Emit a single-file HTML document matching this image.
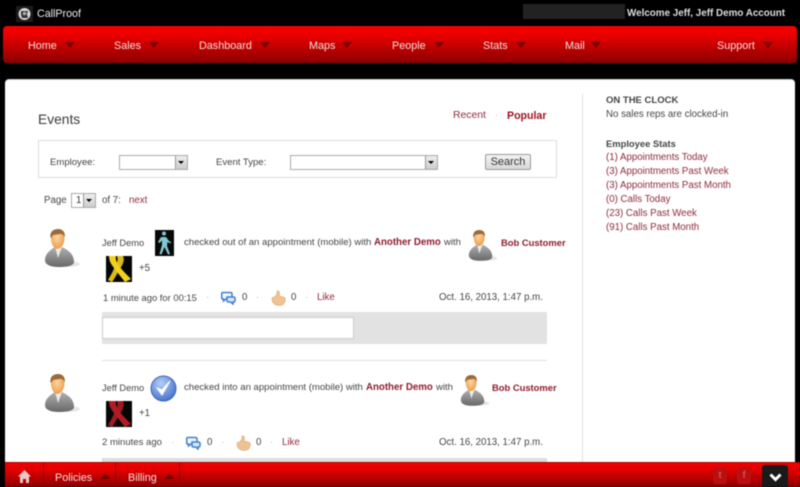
<!DOCTYPE html>
<html><head><meta charset="utf-8"><style>
html,body{margin:0;padding:0;background:#000}
#p{position:relative;width:800px;height:487px;overflow:hidden;background:#000;font-family:"Liberation Sans",Arial,sans-serif;font-size:9.7px;color:#454545;filter:blur(.4px)}
#p div,#p span.a,#p svg.a{position:absolute}
.t{position:absolute;white-space:nowrap;line-height:14px;height:14px}
.e{font-size:9.55px}
.l{color:#8e2b3e}
.b{font-weight:bold}
.r{color:#8e1c2c;font-weight:bold}
.n{color:#f6dcdc;font-size:10.8px}
.ar{width:0;height:0;border-left:5px solid transparent;border-right:5px solid transparent;border-top:6px solid #7c0000}
.au{width:0;height:0;border-left:5px solid transparent;border-right:5px solid transparent;border-bottom:5px solid #700000}
.sel{background:#fff;border:1px solid #aaa;box-sizing:border-box}
.sb{right:0;top:0;width:12px;height:100%;background:linear-gradient(#eee,#ccc);border-left:1px solid #999;box-sizing:border-box}
.sb:after{content:"";position:absolute;left:2px;top:5px;border-left:3px solid transparent;border-right:3px solid transparent;border-top:3px solid #000}
.d{color:#bbb}
</style></head><body><div id="p">
<svg width="0" height="0" style="position:absolute"><defs>
<radialGradient id="sk" cx=".45" cy=".4" r=".7"><stop offset="0" stop-color="#fdd6a0"/><stop offset="1" stop-color="#e8943f"/></radialGradient>
<linearGradient id="bd" x1="0" y1="0" x2="0" y2="1"><stop offset="0" stop-color="#b0b0b0"/><stop offset="1" stop-color="#686868"/></linearGradient>
<radialGradient id="ck" cx=".4" cy=".3" r=".8"><stop offset="0" stop-color="#b5cdf5"/><stop offset="1" stop-color="#3b68c8"/></radialGradient>
<symbol id="person" viewBox="0 0 37 42">
<ellipse cx="24" cy="35" rx="12" ry="3" fill="#e6e6e6"/>
<path d="M1 31C1 25 6 21 11 18L14 23 18 18C24 21 30 25 30 33 30 37 22 38 15 38 7 38 1 36 1 31Z" fill="url(#bd)"/>
<path d="M11 18L14 29 18 18 14 22Z" fill="#e8e8e8"/>
<path d="M7 9C7 3 10 1 13.500 1 17 1 20.500 3 20.500 9 20.500 15 17 20 13.500 20 10 20 7 15 7 9Z" fill="url(#sk)"/>
<path d="M6.500 9C5.500 3 9 0 14 0 18 0 21 2 21 8 19 5 17 4.500 15 5 12 6 9 5 8.500 7Z" fill="#9a6a3a"/>
</symbol>
<symbol id="chat" viewBox="0 0 15 14">
<path d="M1.500 1.500H9.500Q11 1.500 11 3V6.500Q11 8 9.500 8H5L2.500 10V8H1.500Q.7 8 .7 6.500V3Q.7 1.500 1.500 1.500Z" fill="#eef5fc" stroke="#3f80cc" stroke-width="1.500"/>
<path d="M6 6H12.500Q14 6 14 7.500V9.500Q14 11 12.500 11H12V13L9.500 11H7.500Q6 11 6 9.500Z" fill="#d8e8f8" stroke="#3f80cc" stroke-width="1.500"/>
</symbol>
<symbol id="thumb" viewBox="0 0 15 16">
<path d="M1 8.500C1 7.500 2 7 3.500 7 5 6 6 4.500 6 2 6 1 7 .5 7.500 1 9 2 8.500 4.500 8 6L12.500 7C14 7.500 14.500 9 14 11 13.500 14 11.500 15.500 8 15.500 4 15.500 1 13 1 8.500Z" fill="#efc294" stroke="#d9a46c" stroke-width=".6"/>
</symbol>
<symbol id="walk" viewBox="0 0 19 26">
<rect width="19" height="26" fill="#080808"/>
<circle cx="9" cy="3.500" r="2" fill="#7fc8d4"/>
<path d="M6 7H11L14 11 16 12 15.500 13.500 12.500 12 12 16 15 24 13 24.500 9.500 17 6.500 24.500 4.500 24 7 15V10.500L4.500 13 3 12Z" fill="#7fc8d4"/>
</symbol>
<symbol id="ribbon" viewBox="0 0 26 26">
<rect width="26" height="26" fill="#060606"/>
<path d="M9 9C12 6 12 3 11 0H17C19 4 17 9 13 14 11 18 9 22 6 26L2 24C5 19 8 14 9 9Z" fill="currentColor" opacity=".9"/>
<path d="M3 0H10C9 5 12 8 14 11 17 15 21 19 25 23L19 26C15 21 11 16 8 12 5 8 3 5 3 0Z" fill="currentColor"/>
</symbol>
</defs></svg>

<!-- top bar -->
<svg class="a" style="left:16px;top:6px" width="17" height="16" viewBox="0 0 17 16"><rect width="17" height="16" fill="#1c1c1c"/><circle cx="8.500" cy="8" r="6" fill="#d8d8d8"/><path d="M5 5H12L11 8 12 12H6L5 9Z" fill="#333"/><circle cx="8.500" cy="7.500" r="1.800" fill="#aaa"/></svg>
<span class="t" style="left:37px;top:7px;color:#eee;font-size:10.7px">CallProof</span>
<div style="left:523px;top:4px;width:102px;height:15px;background:#222"></div>
<span class="t b" style="left:627px;top:7px;color:#ddd;font-size:9.85px">Welcome Jeff, Jeff Demo Account</span>

<!-- nav -->
<div style="left:3px;top:26px;width:794px;height:37px;border-radius:4px;background:linear-gradient(#fa0000 0%,#e80000 25%,#8c0000 100%)"></div>
<span class="t n" style="left:28px;top:39px">Home</span><div class="ar" style="left:65px;top:42px"></div>
<span class="t n" style="left:114px;top:39px">Sales</span><div class="ar" style="left:149px;top:42px"></div>
<span class="t n" style="left:199px;top:39px">Dashboard</span><div class="ar" style="left:260px;top:42px"></div>
<span class="t n" style="left:309px;top:39px">Maps</span><div class="ar" style="left:342px;top:42px"></div>
<span class="t n" style="left:392px;top:39px">People</span><div class="ar" style="left:434px;top:42px"></div>
<span class="t n" style="left:483px;top:39px">Stats</span><div class="ar" style="left:516px;top:42px"></div>
<span class="t n" style="left:565px;top:39px">Mail</span><div class="ar" style="left:591px;top:42px"></div>
<span class="t n" style="left:717px;top:39px">Support</span><div class="ar" style="left:763px;top:42px"></div>

<!-- main -->
<div style="left:5px;top:79px;width:790px;height:400px;background:#fff;border-radius:4px 4px 0 0;border-top:1px solid #ccc;box-sizing:border-box"></div>
<div style="left:582px;top:94px;width:1px;height:368px;background:#e0e0e0"></div>

<span class="t" style="left:38px;top:113px;font-size:13.8px;color:#3c3c3c">Events</span>
<span class="t l" style="left:453px;top:109px;font-size:10.4px">Recent</span>
<span class="t d" style="left:495px;top:109px">·</span>
<span class="t b" style="left:507px;top:109px;color:#9c1424;font-size:10.6px">Popular</span>

<div style="left:38px;top:140px;width:519px;height:38px;border:1px solid #ddd;box-sizing:border-box"></div>
<span class="t e" style="left:50px;top:156px">Employee:</span>
<div class="sel" style="left:119px;top:155px;width:69px;height:15px"><div class="sb"></div></div>
<span class="t e" style="left:216px;top:156px">Event Type:</span>
<div class="sel" style="left:290px;top:155px;width:148px;height:15px"><div class="sb"></div></div>
<div style="left:485px;top:154px;width:46px;height:16px;border:1px solid #999;border-radius:2px;background:linear-gradient(#f4f4f4,#d8d8d8);box-sizing:border-box;text-align:center;line-height:15px;font-size:11px;color:#333">Search</div>

<span class="t" style="left:44px;top:194px">Page</span>
<div class="sel" style="left:71px;top:193px;width:25px;height:15px;padding-left:4px;line-height:13px;color:#333">1<div class="sb"></div></div>
<span class="t" style="left:102px;top:194px">of 7:</span>
<span class="t l" style="left:129px;top:194px">next</span>

<!-- event 1 -->
<svg class="a" style="left:44px;top:229px" width="37" height="42"><use href="#person" width="37" height="42"/></svg>
<span class="t" style="left:102px;top:236px;font-size:9.3px">Jeff Demo</span>
<svg class="a" style="left:155px;top:230px" width="19" height="26"><use href="#walk" width="19" height="26"/></svg>
<span class="t e" style="left:184px;top:236px">checked out of an appointment (mobile) with</span>
<span class="t r" style="left:374px;top:236px">Another Demo</span>
<span class="t e" style="left:444px;top:236px">with</span>
<svg class="a" style="left:468px;top:230px" width="30" height="34"><use href="#person" width="30" height="34"/></svg>
<span class="t r" style="left:501px;top:236px;font-size:9.4px">Bob Customer</span>
<svg class="a" style="left:106px;top:256px;color:#f0d020" width="26" height="26"><use href="#ribbon" width="26" height="26"/></svg>
<span class="t" style="left:139px;top:262px">+5</span>

<span class="t" style="left:103px;top:291px;font-size:9.4px">1 minute ago for 00:15</span>
<span class="t d" style="left:206px;top:291px">·</span>
<svg class="a" style="left:221px;top:291px" width="15" height="14"><use href="#chat" width="15" height="14"/></svg>
<span class="t" style="left:242px;top:291px">0</span>
<span class="t d" style="left:256px;top:291px">·</span>
<svg class="a" style="left:271px;top:290px" width="15" height="16"><use href="#thumb" width="15" height="16"/></svg>
<span class="t" style="left:291px;top:291px">0</span>
<span class="t d" style="left:305px;top:291px">·</span>
<span class="t l" style="left:317px;top:291px">Like</span>
<span class="t" style="left:439px;top:291px">Oct. 16, 2013, 1:47 p.m.</span>

<div style="left:102px;top:312px;width:445px;height:32px;background:#e2e2e2"></div>
<div style="left:102px;top:317px;width:252px;height:22px;background:#fff;border:1px solid #ccc;box-sizing:border-box"></div>
<div style="left:102px;top:360px;width:445px;height:1px;background:#e0e0e0"></div>

<!-- event 2 -->
<svg class="a" style="left:44px;top:374px" width="37" height="42"><use href="#person" width="37" height="42"/></svg>
<span class="t" style="left:102px;top:381px;font-size:9.3px">Jeff Demo</span>
<svg class="a" style="left:150px;top:375px" width="27" height="27" viewBox="0 0 27 27"><circle cx="13.500" cy="13.500" r="12.500" fill="url(#ck)" stroke="#3a62b8"/><path d="M7 13L12 20 20 6 12 15Z" fill="#fff" stroke="#fff"/></svg>
<span class="t e" style="left:184px;top:381px">checked into an appointment (mobile) with</span>
<span class="t r" style="left:366px;top:381px">Another Demo</span>
<span class="t e" style="left:436px;top:381px">with</span>
<svg class="a" style="left:460px;top:375px" width="30" height="34"><use href="#person" width="30" height="34"/></svg>
<span class="t r" style="left:492px;top:381px;font-size:9.4px">Bob Customer</span>
<svg class="a" style="left:106px;top:401px;color:#b01c24" width="26" height="26"><use href="#ribbon" width="26" height="26"/></svg>
<span class="t" style="left:139px;top:407px">+1</span>

<span class="t e" style="left:102px;top:436px">2 minutes ago</span>
<span class="t d" style="left:171px;top:436px">·</span>
<svg class="a" style="left:186px;top:436px" width="15" height="14"><use href="#chat" width="15" height="14"/></svg>
<span class="t" style="left:207px;top:436px">0</span>
<span class="t d" style="left:221px;top:436px">·</span>
<svg class="a" style="left:236px;top:435px" width="15" height="16"><use href="#thumb" width="15" height="16"/></svg>
<span class="t" style="left:256px;top:436px">0</span>
<span class="t d" style="left:270px;top:436px">·</span>
<span class="t l" style="left:282px;top:436px">Like</span>
<span class="t" style="left:439px;top:436px">Oct. 16, 2013, 1:47 p.m.</span>
<div style="left:102px;top:458px;width:445px;height:4px;background:#ddd"></div>

<!-- sidebar -->
<span class="t b" style="left:606px;top:94px;color:#444;font-size:9.5px">ON THE CLOCK</span>
<span class="t" style="left:606px;top:108px">No sales reps are clocked-in</span>
<span class="t b" style="left:606px;top:137px;font-size:9.4px">Employee Stats</span>
<span class="t l" style="left:606px;top:151px">(1) Appointments Today</span>
<span class="t l" style="left:606px;top:165px">(3) Appointments Past Week</span>
<span class="t l" style="left:606px;top:179px">(3) Appointments Past Month</span>
<span class="t l" style="left:606px;top:193px">(0) Calls Today</span>
<span class="t l" style="left:606px;top:207px">(23) Calls Past Week</span>
<span class="t l" style="left:606px;top:221px">(91) Calls Past Month</span>

<!-- bottom bar -->
<div style="left:5px;top:462px;width:795px;height:25px;background:linear-gradient(#f00000 0%,#e00000 30%,#8c0000 100%);border-top:1px solid #b00000;box-sizing:border-box"></div>
<div style="left:43px;top:463px;width:1px;height:24px;background:#900000"></div>
<div style="left:115px;top:463px;width:1px;height:24px;background:#900000"></div>
<div style="left:179px;top:463px;width:1px;height:24px;background:#900000"></div>
<svg class="a" style="left:18px;top:470px" width="13" height="13" viewBox="0 0 13 13"><path d="M6.500 0L13 6.500H11V13H8V9H5V13H2V6.500H0Z" fill="#eec4c4"/></svg>
<span class="t n" style="left:55px;top:471px">Policies</span><div class="au" style="left:100px;top:474px"></div>
<span class="t n" style="left:128px;top:471px">Billing</span><div class="au" style="left:164px;top:474px"></div>
<div style="left:713px;top:468px;width:14px;height:16px;background:#b81010;border-radius:2px;color:#e04848;font-size:10px;font-weight:bold;text-align:center;line-height:16px">t</div>
<div style="left:737px;top:468px;width:14px;height:16px;background:#b81010;border-radius:2px;color:#e04848;font-size:10px;font-weight:bold;text-align:center;line-height:16px">f</div>
<div style="left:762px;top:465px;width:26px;height:22px;background:#1a1a1a;border-radius:3px 3px 0 0"></div>
<svg class="a" style="left:769px;top:473px" width="13" height="9" viewBox="0 0 13 9"><path d="M1.500 1.500L6.500 6.500 11.500 1.500" fill="none" stroke="#fff" stroke-width="3"/></svg>
</div></body></html>
